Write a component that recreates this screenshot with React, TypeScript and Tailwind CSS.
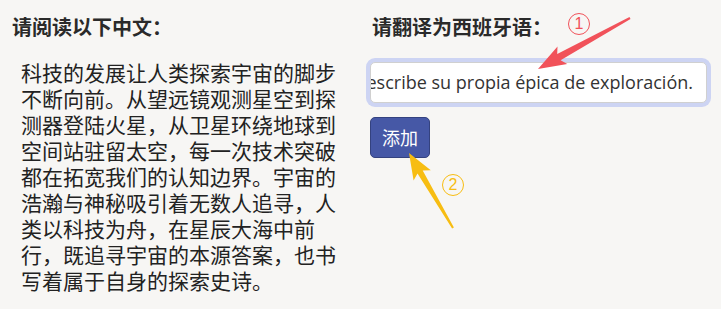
import React from 'react'

// ─── Content ──────────────────────────────────────────────────────────────────

const SOURCE_TEXT =
  '科技的发展让人类探索宇宙的脚步不断向前。从望远镜观测星空到探测器登陆火星，从卫星环绕地球到空间站驻留太空，每一次技术突破都在拓宽我们的认知边界。宇宙的浩瀚与神秘吸引着无数人追寻，人类以科技为舟，在星辰大海中前行，既追寻宇宙的本源答案，也书写着属于自身的探索史诗。'

const TRANSLATION =
  'La tecnología impulsa a la humanidad en la exploración del universo; guiada por la ciencia, busca respuestas y escribe su propia épica de exploración.'

// ─── Component ────────────────────────────────────────────────────────────────

export default function App() {
  return (
    <div className="relative h-[309px] w-full overflow-hidden bg-[#f7f6f4] font-['Noto_Sans_CJK_SC',sans-serif] text-[#222]">
      <div className="flex pt-[14px]">
        {/* Source column */}
        <div className="w-[370px] shrink-0 pl-3">
          <h2 className="text-[20px] leading-[26px] font-semibold text-[#2a2a2a]">请阅读以下中文：</h2>
          <p className="mt-[19px] ml-[9px] w-[325px] text-[21px] leading-[26px] text-[#222]">{SOURCE_TEXT}</p>
        </div>

        {/* Translation column */}
        <div className="w-[337px] min-w-0 shrink-0">
          <h2 className="pl-[2px] text-[20px] leading-[26px] font-semibold text-[#2a2a2a]">请翻译为西班牙语：</h2>
          <div className="mt-[22px] flex h-[41px] w-[337px] items-center justify-end overflow-hidden rounded-[5px] border border-[#d0d0d0] bg-white pr-[13px] pl-[7px] shadow-[0_0_0_4px_#cdd4f3]">
            <span className="shrink-0 whitespace-nowrap font-['Open_Sans',sans-serif] text-[18px] text-[#333]">{TRANSLATION}</span>
          </div>
          <button className="mt-[14px] flex h-[41px] w-[60px] items-center justify-center rounded-[5px] border border-[#34427f] bg-[#4658a6] text-[18px] text-white">
            添加
          </button>
        </div>
      </div>

      {/* Annotations */}
      <svg className="pointer-events-none absolute inset-0" width="721" height="309" viewBox="0 0 721 309">
        <polygon
          fill="#f1525a"
          points="538,69 567.3,63.9 560.6,60.2 630.5,18.9 629.5,17.1 557.2,54.1 557.5,46.5"
        />
        <polygon
          fill="#f7bd12"
          points="409,153 430.8,170.3 422.7,170.5 453.9,227.5 452.1,228.5 417.5,173.5 413.6,180.5"
        />
      </svg>
      <div className="pointer-events-none absolute left-[568px] top-[13px] flex h-[22px] w-[22px] items-center justify-center rounded-full border-[1.5px] border-[#f1525a] font-['Liberation_Sans',sans-serif] text-[16px] leading-none text-[#f1525a]">
        1
      </div>
      <div className="pointer-events-none absolute left-[442px] top-[174px] flex h-[22px] w-[22px] items-center justify-center rounded-full border-[1.5px] border-[#f7bd12] font-['Liberation_Sans',sans-serif] text-[16px] leading-none text-[#f7bd12]">
        2
      </div>
    </div>
  )
}
